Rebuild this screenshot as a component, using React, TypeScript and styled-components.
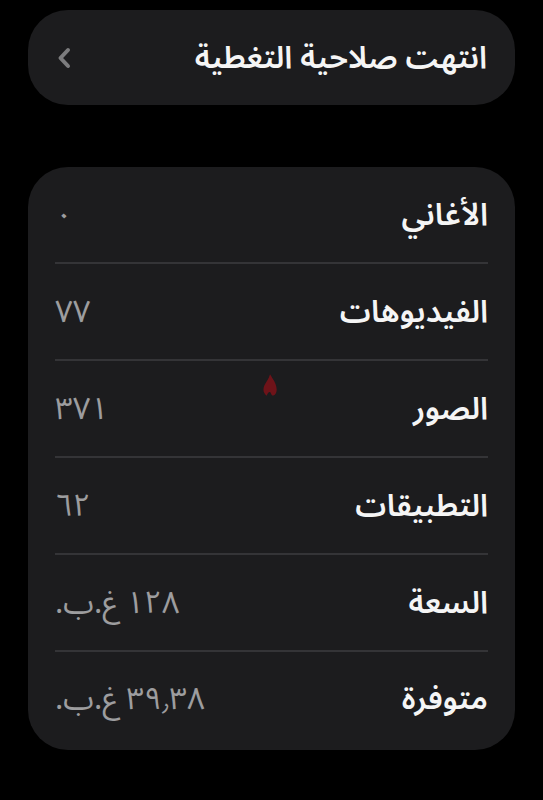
import styled, { createGlobalStyle } from "styled-components";

const GlobalStyle = createGlobalStyle`
  html, body {
    margin: 0;
    padding: 0;
    background: #000;
  }
  body {
    font-family: "Noto Sans Arabic", "DejaVu Sans", "Noto Sans", sans-serif;
  }
`;

const Page = styled.div`
  position: relative;
  width: 543px;
  min-height: 800px;
  box-sizing: border-box;
  padding: 10px 28px 0 28px;
  display: flex;
  flex-direction: column;
  gap: 62px;
  background: #000;
`;

const Card = styled.div`
  background: #1c1c1e;
  border-radius: 40px;
  box-sizing: border-box;
`;

const HeaderCard = styled(Card)`
  height: 95px;
  display: flex;
  align-items: center;
  justify-content: space-between;
  padding: 0 28px 0 26px;
`;

const Title = styled.div`
  color: #f5f5f5;
  font-size: 31px;
  font-weight: 600;
`;

const Chevron = styled.svg`
  width: 20px;
  height: 26px;
  flex-shrink: 0;
`;

const ListCard = styled(Card)`
  padding: 0 27px;
  display: flex;
  flex-direction: column;
`;

const Row = styled.div<{ $last?: boolean }>`
  height: ${(p) => (p.$last ? 98 : 97)}px;
  box-sizing: border-box;
  display: flex;
  align-items: center;
  justify-content: space-between;
  border-bottom: ${(p) => (p.$last ? "none" : "2px solid #343437")};
  padding-bottom: ${(p) => (p.$last ? 4 : 0)}px;
`;

const Label = styled.div`
  color: #f5f5f5;
  font-size: 31px;
  font-weight: 600;
`;

const Value = styled.div`
  color: #9d9d9f;
  font-size: 31px;
  letter-spacing: 1px;
`;

const Watermark = styled.svg`
  position: absolute;
  left: 261px;
  top: 372px;
  width: 18px;
  height: 26px;
  opacity: 0.75;
`;

const rows = [
  { label: "الأغاني", value: "٠" },
  { label: "الفيديوهات", value: "٧٧" },
  { label: "الصور", value: "٣٧١" },
  { label: "التطبيقات", value: "٦٢" },
  { label: "السعة", value: "١٢٨ غ.ب." },
  { label: "متوفرة", value: "٣٩٫٣٨ غ.ب." },
];

export default function App() {
  return (
    <>
      <GlobalStyle />
      <Page dir="rtl">
        <HeaderCard>
          <Title>انتهت صلاحية التغطية</Title>
          <Chevron viewBox="0 0 20 26">
            <path
              d="M14 5 L6.5 13 L14 21"
              fill="none"
              stroke="#7c7c7e"
              strokeWidth="4"
              strokeLinecap="round"
              strokeLinejoin="round"
            />
          </Chevron>
        </HeaderCard>
        <ListCard>
          {rows.map((r, i) => (
            <Row key={r.label} $last={i === rows.length - 1}>
              <Label>{r.label}</Label>
              <Value>{r.value}</Value>
            </Row>
          ))}
        </ListCard>
        <Watermark viewBox="0 0 16 24">
          <path d="M8 2 C11 7 15 12 14 18 C13 22 10 23 9 20 C8 17 6 19 5 22 C2 20 1 16 3 12 C5 8 7 6 8 2 Z" fill="#8a1018" />
        </Watermark>
      </Page>
    </>
  );
}
